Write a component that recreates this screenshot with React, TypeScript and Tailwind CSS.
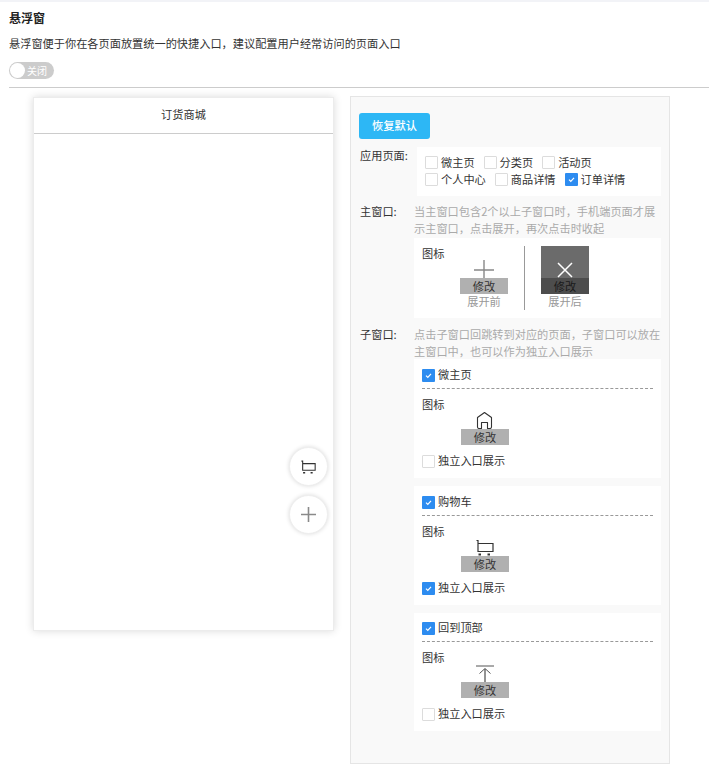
const pageOptions = [
  [
    { label: "微主页", checked: false },
    { label: "分类页", checked: false },
    { label: "活动页", checked: false },
  ],
  [
    { label: "个人中心", checked: false },
    { label: "商品详情", checked: false },
    { label: "订单详情", checked: true },
  ],
];

function CheckBox({ checked }: { checked: boolean }) {
  if (!checked) {
    return <span className="block h-[13px] w-[13px] shrink-0 rounded-[1px] border border-[#dcdcdc] bg-white" />;
  }
  return (
    <span className="flex h-[13px] w-[13px] shrink-0 items-center justify-center rounded-[1px] bg-[#2d8cf0]">
      <svg width="9" height="9" viewBox="0 0 9 9" fill="none" stroke="#fff" strokeWidth="1.2">
        <path d="M2 4.6 L3.8 6.4 L7 2.8" />
      </svg>
    </span>
  );
}

function HomeIcon() {
  return (
    <svg width="18" height="18" viewBox="0 0 18 18" fill="none" stroke="#333" strokeWidth="1.1">
      <path d="M3 17.5 Q1.5 17.5 1.5 16 V6.5 L8.5 1.5 L15.5 6.5 V16 Q15.5 17.5 14 17.5 H11.5 V11.5 H5.5 V17.5 Z" strokeLinejoin="round" />
    </svg>
  );
}

function CartIcon() {
  return (
    <svg width="18" height="18" viewBox="0 0 18 18" fill="none" stroke="#333" strokeWidth="1.2">
      <path d="M0.5 2.5 H2 V13.5 H17 V5.5 H2" />
      <path d="M2.5 16.5 H5 M11.5 16.5 H14" strokeWidth="1.8" />
    </svg>
  );
}

function TopIcon() {
  return (
    <svg width="18" height="18" viewBox="0 0 18 18" fill="none" stroke="#555" strokeWidth="1">
      <path d="M0 2 H18" />
      <path d="M9 5 V18" strokeWidth="1.6" stroke="#777" />
      <path d="M3.5 9.5 L9 4.5 L14.5 9.5" />
    </svg>
  );
}

function IconBox({ icon, dark }: { icon: React.ReactNode; dark?: boolean }) {
  return (
    <div className={`flex h-12 w-12 flex-col ${dark ? "bg-[#6b6b6b]" : ""}`}>
      <div className="flex h-8 items-end justify-center">{icon}</div>
      <div className={`flex h-4 items-center justify-center ${dark ? "bg-[#4d4d4d] text-[#1a1a1a]" : "bg-[#b0b0b0] text-[#333]"}`}>
        修改
      </div>
    </div>
  );
}

function SubWindow({
  title,
  icon,
  standalone,
  tight,
}: {
  title: string;
  icon: React.ReactNode;
  standalone: boolean;
  tight?: boolean;
}) {
  return (
    <div className={`bg-white px-2 ${tight ? "h-[118px] pt-[9px]" : "h-[119px] pt-[10px]"}`}>
      <div className="flex h-[13px] items-center gap-[3px]">
        <CheckBox checked />
        <span className="pb-[2px]">{title}</span>
      </div>
      <div className="mt-[6px] border-t border-dashed border-[#999]" />
      <div className="mt-[7px] leading-[16px]">图标</div>
      <div className="ml-[39px] mt-[-15px]">
        <IconBox icon={icon} />
      </div>
      <div className="mt-[10px] flex h-[13px] items-center gap-[3px]">
        <CheckBox checked={standalone} />
        <span className="pb-[2px]">独立入口展示</span>
      </div>
    </div>
  );
}

export default function App() {
  return (
    <div
      className="relative h-[772px] w-[709px] overflow-hidden bg-white text-[11.2px] leading-[17px] text-[#333]"
      style={{ fontFamily: '"Noto Sans CJK SC", "Liberation Sans", sans-serif' }}
    >
      <div className="h-[2px] bg-[#f2f3f7]" />

      <div className="pl-[9px]">
        <h1 className="mt-[7px] text-[12px] font-bold leading-[17px] text-[#222]">悬浮窗</h1>
        <p className="mt-[9px] text-[#333]">悬浮窗便于你在各页面放置统一的快捷入口，建议配置用户经常访问的页面入口</p>
        <div className="mt-[10px] flex h-[17px] w-[45px] items-center rounded-full bg-[#cccccc] pl-[1px]">
          <span className="h-[15px] w-[15px] rounded-full bg-white" />
          <span className="ml-[2px] text-[10px] text-white">关闭</span>
        </div>
        <div className="mt-[8px] border-t border-[#cccccc]" />
      </div>

      <div className="mt-[8px] flex items-start">
        <div className="relative ml-[33px] mt-[1px] h-[534px] w-[301px] border border-[#ececec] bg-white shadow-[0_0_8px_rgba(0,0,0,0.15)]">
          <div className="flex h-[36px] items-center justify-center border-b border-[#cccccc] pb-[2px]">订货商城</div>

          <div className="absolute left-[255px] top-[349px] flex h-[39px] w-[39px] items-center justify-center rounded-full border border-[#eeeeee] bg-white shadow-[0_0_4px_rgba(0,0,0,0.15)]">
            <svg width="15" height="15" viewBox="0 0 18 18" fill="none" stroke="#333" strokeWidth="1.3">
              <path d="M0.5 2.5 H2 V13.5 H17 V5.5 H2" />
              <path d="M2.5 16.5 H5 M11.5 16.5 H14" strokeWidth="1.8" />
            </svg>
          </div>
          <div className="absolute left-[255px] top-[397px] flex h-[39px] w-[39px] items-center justify-center rounded-full border border-[#eeeeee] bg-white shadow-[0_0_4px_rgba(0,0,0,0.15)]">
            <svg width="15" height="15" viewBox="0 0 15 15" fill="none" stroke="#8a8a8a" strokeWidth="1.6">
              <path d="M7.5 0 V15 M0 7.5 H15" />
            </svg>
          </div>
        </div>

        <div className="ml-[16px] h-[668px] w-[320px] border border-[#e5e5e5] bg-[#f9f9f9] pl-[8px] pr-[8px] pt-[16px]">
          <button className="flex h-[26px] w-[71px] items-center justify-center rounded-[3px] bg-[#2db7f5] pb-[2px] font-medium text-white">
            恢复默认
          </button>

          <div className="mt-[8px] flex">
            <div className="w-[58px] pl-[1px]">应用页面:</div>
            <div className="h-[49px] w-[244px] bg-white pl-[8px] pt-[7px]">
              {pageOptions.map((row, i) => (
                <div key={i} className="flex h-[17px] items-center">
                  {row.map((item) => (
                    <div key={item.label} className="mr-[9px] flex items-center gap-[3px]">
                      <CheckBox checked={item.checked} />
                      <span>{item.label}</span>
                    </div>
                  ))}
                </div>
              ))}
            </div>
          </div>

          <div className="mt-[7px] flex">
            <div className="w-[55px] pl-[1px]">主窗口:</div>
            <div className="w-[247px] text-[#aaaaaa]">当主窗口包含2个以上子窗口时，手机端页面才展示主窗口，点击展开，再次点击时收起</div>
          </div>
          <div className="ml-[55px] mt-[1px] flex h-[80px] w-[247px] bg-white pl-2 pt-2">
            <div className="mt-[-1px] w-[38px] leading-[16px]">图标</div>
            <div className="flex w-[48px] flex-col items-center">
              <IconBox
                icon={
                  <svg width="20" height="20" viewBox="0 0 20 20" fill="none" stroke="#888" strokeWidth="1.4" className="mb-[-2px]">
                    <path d="M10 0 V20 M0 10 H20" />
                  </svg>
                }
              />
              <span className="mt-[-1px] text-[#999]">展开前</span>
            </div>
            <div className="ml-[16px] h-[64px] w-px bg-[#999]" />
            <div className="ml-[16px] flex w-[48px] flex-col items-center">
              <IconBox
                dark
                icon={
                  <svg width="16" height="16" viewBox="0 0 16 16" fill="none" stroke="#fff" strokeWidth="1.5">
                    <path d="M1 1 L15 15 M15 1 L1 15" />
                  </svg>
                }
              />
              <span className="mt-[-1px] text-[#999]">展开后</span>
            </div>
          </div>

          <div className="mt-[8px] flex">
            <div className="w-[55px] pl-[1px]">子窗口:</div>
            <div className="w-[247px] text-[#aaaaaa]">点击子窗口回跳转到对应的页面，子窗口可以放在主窗口中，也可以作为独立入口展示</div>
          </div>
          <div className="ml-[55px] mt-[-1px] flex w-[247px] flex-col gap-[8px]">
            <SubWindow title="微主页" icon={<HomeIcon />} standalone={false} />
            <SubWindow title="购物车" icon={<CartIcon />} standalone />
            <SubWindow title="回到顶部" icon={<TopIcon />} standalone={false} tight />
          </div>
        </div>
      </div>
    </div>
  );
}
